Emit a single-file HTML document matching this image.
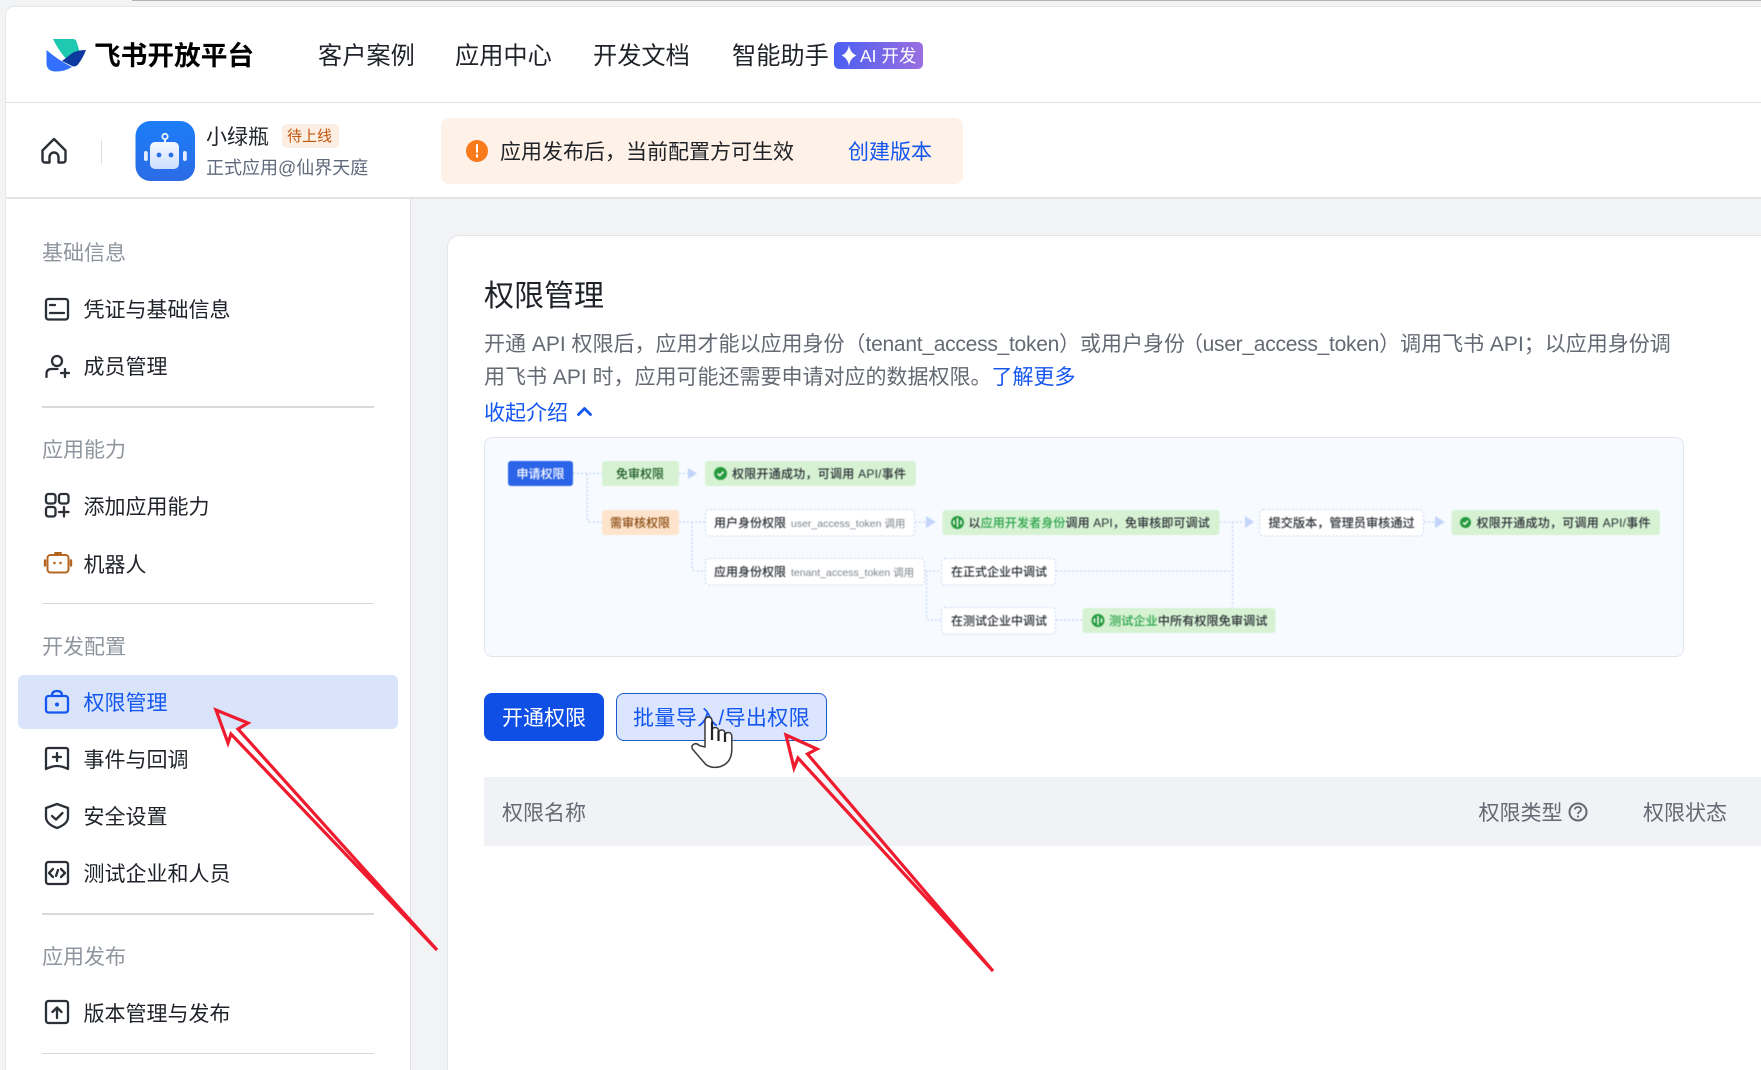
<!DOCTYPE html>
<html lang="zh-CN"><head><meta charset="utf-8"><title>飞书开放平台</title>
<style>
html,body{margin:0;padding:0;width:1761px;height:1070px;overflow:hidden;background:#f2f3f5}
body{position:relative;font-family:"Liberation Sans","Noto Sans CJK SC",sans-serif;color:#1f2329;font-size:21px}
.a{position:absolute}
.t{position:absolute;white-space:nowrap;line-height:30px;height:30px}
.g{color:#8f959e}.b{color:#1456f0}
svg{position:absolute;left:0;top:0}
svg text{font-family:"Liberation Sans","Noto Sans CJK SC",sans-serif}
</style></head><body>
<div class="a" style="left:132px;top:0;right:0;height:1px;background:#b5b5b5"></div>
<div class="a" style="left:5px;top:6px;right:-10px;height:192px;background:#fff;border:1px solid #e6e6e6;border-radius:9px 0 0 0;box-sizing:border-box"></div>
<div class="a" style="left:6px;top:102px;right:0;height:1px;background:#dee0e3"></div>
<div class="a" style="left:6px;top:197px;right:0;height:2px;background:#e3e4e7"></div>
<div class="a" style="left:5px;top:199px;width:406px;height:871px;background:#fff;border-left:1px solid #e6e6e6;border-right:1px solid #dee0e3;box-sizing:border-box"></div>

<!-- top nav -->
<div class="t" style="left:94px;top:41px;font-size:26.7px;font-weight:700;color:#000">飞书开放平台</div>
<div class="t" style="left:318px;top:42px;font-size:24.2px">客户案例</div>
<div class="t" style="left:455px;top:42px;font-size:24.2px">应用中心</div>
<div class="t" style="left:593px;top:42px;font-size:24.2px">开发文档</div>
<div class="t" style="left:732px;top:42px;font-size:24.2px">智能助手</div>
<div class="a" style="left:834px;top:42px;width:89px;height:27px;border-radius:5px;background:linear-gradient(90deg,#4b5ff2,#9a6fe0)"></div>
<div class="t" style="left:860px;top:41px;font-size:17.500px;color:#fff">AI 开发</div>

<!-- sub header -->
<div class="a" style="left:101px;top:140px;width:1px;height:24px;background:#dee0e3"></div>
<div class="t" style="left:206px;top:123px;font-size:21px">小绿瓶</div>
<div class="a" style="left:282px;top:124px;width:57px;height:24px;border-radius:5px;background:#fdeee3"></div>
<div class="t" style="left:287px;top:122px;font-size:15px;color:#c2560c">待上线</div>
<div class="t" style="left:206px;top:153px;font-size:18px;color:#5f6a7d">正式应用@仙界天庭</div>
<div class="a" style="left:441px;top:118px;width:522px;height:66px;border-radius:8px;background:#fef1e7"></div>
<div class="t" style="left:500px;top:138px">应用发布后，当前配置方可生效</div>
<div class="t b" style="left:848px;top:138px">创建版本</div>

<!-- sidebar -->
<div class="t g" style="left:42px;top:239px">基础信息</div>
<div class="t" style="left:83.500px;top:296px">凭证与基础信息</div>
<div class="t" style="left:83.500px;top:353px">成员管理</div>
<div class="a" style="left:42px;top:406px;width:332px;height:2px;background:#d9d9d9"></div>
<div class="t g" style="left:42px;top:436px">应用能力</div>
<div class="t" style="left:83.500px;top:493px">添加应用能力</div>
<div class="t" style="left:83.500px;top:551px">机器人</div>
<div class="a" style="left:42px;top:603px;width:332px;height:1px;background:#d9d9d9"></div>
<div class="t g" style="left:42px;top:633px">开发配置</div>
<div class="a" style="left:18px;top:675px;width:380px;height:54px;border-radius:6px;background:#d9e4fb"></div>
<div class="t b" style="left:83.500px;top:689px">权限管理</div>
<div class="t" style="left:83.500px;top:746px">事件与回调</div>
<div class="t" style="left:83.500px;top:803px">安全设置</div>
<div class="t" style="left:83.500px;top:860px">测试企业和人员</div>
<div class="a" style="left:42px;top:913px;width:332px;height:2px;background:#d9d9d9"></div>
<div class="t g" style="left:42px;top:943px">应用发布</div>
<div class="t" style="left:83.500px;top:1000px">版本管理与发布</div>
<div class="a" style="left:42px;top:1053px;width:332px;height:1px;background:#d9d9d9"></div>

<!-- main card -->
<div class="a" style="left:447px;top:235px;width:1330px;height:850px;background:#fff;border:1px solid #e4e5e8;border-radius:12px 0 0 0;box-sizing:border-box"></div>
<div class="t" style="left:484px;top:282px;font-size:30px">权限管理</div>
<div class="t" style="left:484px;top:330px;color:#646a73">开通 API 权限后，应用才能以应用身份（<span style="letter-spacing:-.26px">tenant_access_token</span>）或用户身份<span style="letter-spacing:-3.5px;position:relative;left:-3px">（</span><span style="letter-spacing:-.26px">user_access_token</span>）调用飞书 API；以应用身份调</div>
<div class="t" style="left:484px;top:363px;color:#646a73">用飞书 API 时，应用可能还需要申请对应的数据权限。<span class="b">了解更多</span></div>
<div class="t b" style="left:484px;top:399px">收起介绍</div>

<div class="a" style="left:484px;top:437px;width:1200px;height:220px;background:#f7fbff;border:1px solid #e3e5e8;border-radius:8px;box-sizing:border-box"></div>

<div class="a" style="left:484px;top:693px;width:120px;height:48px;border-radius:8px;background:#0f4fe6"></div>
<div class="t" style="left:502px;top:704px;color:#fff">开通权限</div>
<div class="a" style="left:616px;top:693px;width:211px;height:48px;border-radius:8px;background:#dbe5fd;border:1px solid #1a5cc8;box-sizing:border-box"></div>
<div class="t b" style="left:633px;top:704px;letter-spacing:.35px">批量导入/导出权限</div>

<div class="a" style="left:484px;top:777px;right:0;height:69px;background:#f1f2f5"></div>
<div class="t" style="left:502px;top:799px;color:#646a73">权限名称</div>
<div class="t" style="left:1478.500px;top:799px;color:#646a73">权限类型</div>
<div class="t" style="left:1643px;top:799px;color:#646a73">权限状态</div>

<!-- diagram -->
<svg width="1761" height="1070" viewBox="0 0 1761 1070" style="filter:blur(.5px)">
<g fill="none" stroke="#b9ccf5" stroke-width="1" stroke-dasharray="2 2">
<path d="M573 473.500H602M587 474V518q0 4 4 4H602M679 473.500H688M679 522H705M692 522V567q0 4 4 4H705M915 522H926M925 571H941M926.500 571V616q0 4 4 4H941M1056 571H1232M1232.500 522V607M1056 620H1082M1220 522H1244M1424 522H1434"/>
</g>
<g fill="#c3d4fb"><path d="M688 468l9 5.500-9 5.500zM926 516l10 6-10 6zM1245 516l9 6-9 6zM1435 516l10 6-10 6z"/></g>
<rect x="508" y="461" width="65" height="25" rx="3" fill="#2b64e8"/>
<rect x="602" y="461" width="77" height="25" rx="3" fill="#d6f2d3"/>
<rect x="705" y="461" width="211" height="25" rx="3" fill="#d6f2d3"/>
<rect x="602" y="510" width="77" height="25" rx="3" fill="#fee4cc"/>
<rect x="942.500" y="510" width="277" height="25" rx="3" fill="#d6f2d3"/>
<rect x="1451.500" y="510" width="208.500" height="25" rx="3" fill="#d6f2d3"/>
<rect x="1082.500" y="608" width="193" height="25" rx="3" fill="#d6f2d3"/>
<g fill="#fff" stroke="#c5d5f7" stroke-dasharray="2 2">
<rect x="705.500" y="509.500" width="209" height="26.500" rx="4"/>
<rect x="705.500" y="558.500" width="219" height="26.500" rx="4"/>
<rect x="941.500" y="558.500" width="114" height="26.500" rx="4"/>
<rect x="941.500" y="607.500" width="114" height="26.500" rx="4"/>
<rect x="1259.500" y="509.500" width="164" height="26.500" rx="4"/>
</g>
<g font-size="12" font-weight="500" fill="#2b2f36">
<text x="516.500" y="478" fill="#fff">申请权限</text>
<text x="616" y="478" fill="#1d5a24">免审权限</text>
<text x="732" y="478" letter-spacing=".25">权限开通成功，可调用 API/事件</text>
<text x="610" y="527" fill="#8a4b12">需审核权限</text>
<text x="714" y="527">用户身份权限</text>
<text x="714" y="576">应用身份权限</text>
<text x="968.500" y="527" letter-spacing=".12">以<tspan fill="#2ba34a">应用开发者身份</tspan>调用 API，免审核即可调试</text>
<text x="1268.500" y="527" font-size="12.200">提交版本，管理员审核通过</text>
<text x="1476.500" y="527" letter-spacing=".25">权限开通成功，可调用 API/事件</text>
<text x="951" y="576">在正式企业中调试</text>
<text x="951" y="625">在测试企业中调试</text>
<text x="1109" y="625" font-size="12.200" fill="#2b2f36"><tspan fill="#2ba34a">测试企业</tspan>中所有权限免审调试</text>
</g>
<g font-size="10.500" fill="#7d838c">
<text x="791" y="527">user_access_token 调用</text>
<text x="791" y="576">tenant_access_token 调用</text>
</g>
<g fill="#249a3c">
<circle cx="720.500" cy="473.500" r="6.500"/>
<circle cx="1465.500" cy="522.500" r="5.500"/>
<circle cx="957.500" cy="522.500" r="6.500"/>
<circle cx="1098" cy="620.500" r="6.500"/>
</g>
<g fill="none" stroke="#fff" stroke-width="1.500">
<path d="M717.500 473.500l2.200 2.200 3.800-4M1463 522.500l1.800 1.800 3.200-3.500M957.500 518v9M954.500 520.500q-1.500 2 0 4M960.500 520.500q1.500 2 0 4M1098 616v9M1095 618.500q-1.500 2 0 4M1101 618.500q1.500 2 0 4"/>
</g>
</svg>

<!-- icons -->
<svg width="1761" height="1070" viewBox="0 0 1761 1070">
<!-- logo -->
<path d="M53 39H73q2.500 0 3.500 2.500L81 56 70 63Q59 52 53 39Z" fill="#1fc8b0"/>
<path d="M46.500 50Q58 60 72 67Q65 71.500 56 71.500 46.500 71.500 46.500 63Z" fill="#3370ff"/>
<path d="M86 50Q76 50 71 54 66 58 62 61L72 66Q75 67.500 78 64.500 83 58 86 50Z" fill="#0e3a9f"/>
<!-- AI star -->
<path d="M849 45q1.200 8 7.500 10.500-6.300 2.500-7.500 10.500-1.200-8-7.500-10.500 6.300-2.500 7.500-10.500z" fill="#fff"/>
<!-- home -->
<path d="M42.500 150.500 54 139 65.500 150.500V160a2.500 2.500 0 0 1-2.500 2.500H58.500V157a4.500 4.500 0 0 0-9 0v5.500H45A2.500 2.500 0 0 1 42.500 160Z" fill="none" stroke="#2b2f36" stroke-width="2.400" stroke-linejoin="round"/>
<!-- app icon -->
<defs>
<linearGradient id="ab" x1="0" y1="0" x2="0" y2="1"><stop offset="0" stop-color="#1b7df8"/><stop offset="1" stop-color="#2b6ce6"/></linearGradient>
<linearGradient id="rb" x1="0" y1="0" x2="0" y2="1"><stop offset="0" stop-color="#f5f8ff"/><stop offset="1" stop-color="#cddffd"/></linearGradient>
</defs>
<rect x="135.500" y="121" width="59.500" height="60" rx="15" fill="url(#ab)"/>
<rect x="150" y="142" width="29" height="27" rx="5" fill="url(#rb)"/>
<circle cx="165" cy="136.500" r="2.700" fill="none" stroke="#eef3ff" stroke-width="1.800"/>
<path d="M165 139v4" stroke="#eef3ff" stroke-width="2"/>
<circle cx="159" cy="155" r="2.400" fill="#2d6fe8"/><circle cx="171" cy="155" r="2.400" fill="#2d6fe8"/>
<rect x="144" y="151" width="3.800" height="10" rx="1.900" fill="#e4edff"/><rect x="183" y="151" width="3.800" height="10" rx="1.900" fill="#e4edff"/>
<!-- banner icon -->
<circle cx="477" cy="151" r="11" fill="#f97a1b"/>
<path d="M477 145v7M477 155v1.800" stroke="#fff" stroke-width="2" stroke-linecap="round"/>

<!-- sidebar icons -->
<g fill="none" stroke="#2b2f36" stroke-width="2.300" stroke-linecap="round" stroke-linejoin="round">
<rect x="46" y="299" width="22" height="20.500" rx="2.500"/>
<path d="M50 305h5M50 313h14"/>
<circle cx="57" cy="361" r="5"/>
<path d="M46.500 377v-3q0-5 5-5h6M65 369v8M61 373h8"/>
<rect x="46" y="494" width="9.500" height="9.500" rx="2.500"/><rect x="59" y="494" width="9.500" height="9.500" rx="2.500"/><rect x="46" y="507" width="9.500" height="9.500" rx="2.500"/>
<path d="M64 507v9.500M59 512h9.500"/>
<path d="M48 748h18a2 2 0 0 1 2 2v19q-6-3-11-3t-11 3v-19a2 2 0 0 1 2-2zM57 753v8M53 757h8"/>
<path d="M57 804l11 4v9q0 7-11 11-11-4-11-11v-9zM52 816l4 3.500 6.500-6.500"/>
<rect x="46" y="862" width="22" height="22" rx="2.500"/>
<path d="M53 869l-4 4 4 4M61 869l4 4-4 4M58 870l-2 6"/>
<rect x="46" y="1001" width="22" height="22" rx="2.500"/>
<path d="M57 1018v-10M52.500 1012l4.500-4.500 4.500 4.500"/>
</g>
<g fill="none" stroke="#b4651f" stroke-width="2" stroke-linejoin="round">
<rect x="47.500" y="555" width="21" height="17.500" rx="3"/>
<path d="M55 553h6" stroke-linecap="round"/>
<path d="M45 560.500v5M71 560.500v5" stroke-width="2.400" stroke-linecap="round"/>
</g>
<circle cx="54.500" cy="563" r="1.300" fill="#b4651f"/><circle cx="60.500" cy="563" r="1.300" fill="#b4651f"/>
<g fill="none" stroke="#1456f0" stroke-width="2.300" stroke-linejoin="round">
<rect x="46" y="696" width="22" height="16.500" rx="2.500"/>
<path d="M52 696v-.5q0-4.500 5-4.500t5 4.500v.5"/>
</g>
<circle cx="57" cy="704.500" r="2" fill="#1456f0"/>
<!-- chevron, question -->
<path d="M578.500 414.500l6-6 6 6" fill="none" stroke="#1456f0" stroke-width="2.800" stroke-linecap="round" stroke-linejoin="round"/>
<circle cx="1578" cy="812" r="8.500" fill="none" stroke="#646a73" stroke-width="2"/>
<path d="M1575 809.500q0-2.500 3-2.500t3 2.500q0 1.500-1.500 2.300-1.500.8-1.500 2.200" fill="none" stroke="#646a73" stroke-width="1.700"/>
<circle cx="1578" cy="816.500" r="1.100" fill="#646a73"/>

<!-- cursor -->
<path d="M705 747V721q0-4 3.500-4t3.500 4v9q.5-2.500 3.200-2.500t3.400 3v1.500q.7-2 3.200-2t3.400 3v1.500q.7-2 3.200-2t3.400 3v14q0 13-11 17-9 2.500-15-2l-13-15q-2-3 .5-5 3-2 6 1z" fill="#fff" stroke="#3a3a3a" stroke-width="1.500" stroke-linejoin="round"/>
<path d="M712 722v18M718.500 731v10M725 733v9" stroke="#222" stroke-width="2.200" fill="none"/>

<!-- red arrows -->
<g fill="none" stroke="#ee1c2e" stroke-width="3.200" stroke-linejoin="miter" stroke-linecap="round">
<path d="M216 710 248 723 238 729 437 950 231 734 228 743Z"/>
<path d="M786 735 817 749 807.500 754 993 971 798 758 794 768Z"/>
</g>
</svg>
</body></html>
